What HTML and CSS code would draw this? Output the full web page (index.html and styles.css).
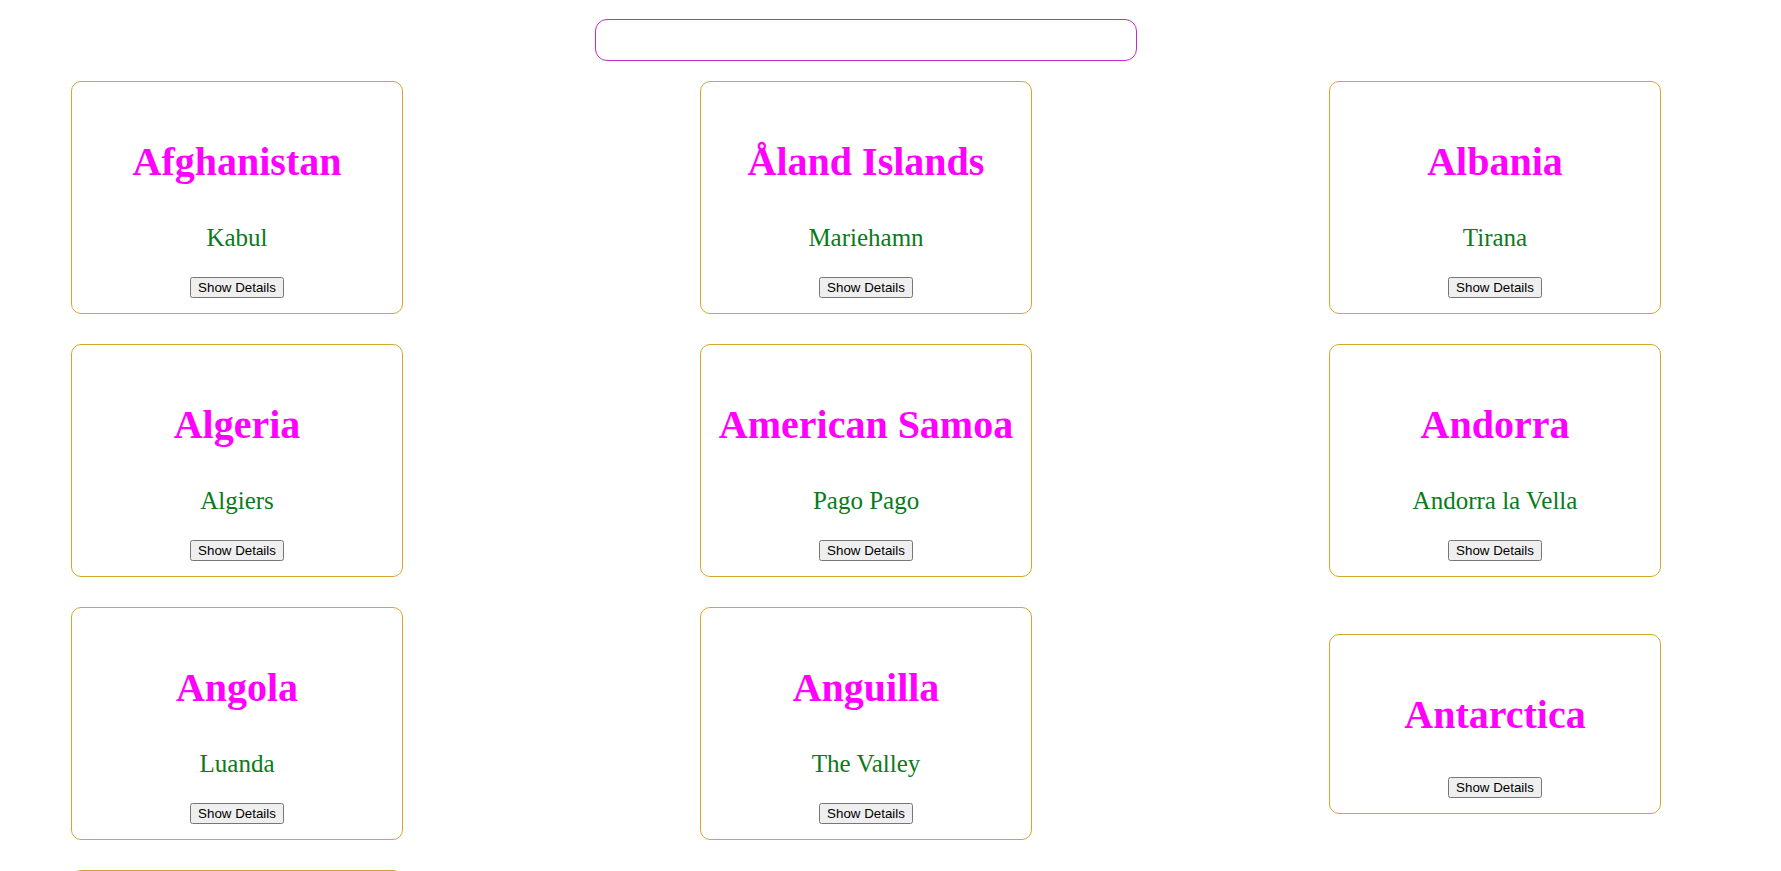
FILE: index.html
```html
<!DOCTYPE html>
<html>
<head>
<meta charset="utf-8">
<title>Countries</title>
<link rel="stylesheet" href="styles.css">
</head>
<body>
<div class="search-row">
  <input class="search" type="text">
</div>
<div class="grid">
  <div class="card"><h1 class="name">Afghanistan</h1><p class="capital">Kabul</p><button class="details">Show Details</button></div>
  <div class="card"><h1 class="name">Åland Islands</h1><p class="capital">Mariehamn</p><button class="details">Show Details</button></div>
  <div class="card"><h1 class="name">Albania</h1><p class="capital">Tirana</p><button class="details">Show Details</button></div>
  <div class="card"><h1 class="name">Algeria</h1><p class="capital">Algiers</p><button class="details">Show Details</button></div>
  <div class="card"><h1 class="name">American Samoa</h1><p class="capital">Pago Pago</p><button class="details">Show Details</button></div>
  <div class="card"><h1 class="name">Andorra</h1><p class="capital">Andorra la Vella</p><button class="details">Show Details</button></div>
  <div class="card"><h1 class="name">Angola</h1><p class="capital">Luanda</p><button class="details">Show Details</button></div>
  <div class="card"><h1 class="name">Anguilla</h1><p class="capital">The Valley</p><button class="details">Show Details</button></div>
  <div class="card"><h1 class="name">Antarctica</h1><p class="capital"></p><button class="details">Show Details</button></div>
  <div class="card"><h1 class="name">Antigua and Barbuda</h1><p class="capital">Saint John's</p><button class="details">Show Details</button></div>
  <div class="card"><h1 class="name">Argentina</h1><p class="capital">Buenos Aires</p><button class="details">Show Details</button></div>
  <div class="card"><h1 class="name">Armenia</h1><p class="capital">Yerevan</p><button class="details">Show Details</button></div>
</div>
</body>
</html>
```
FILE: styles.css
```css
body {
  margin: 8px;
  font-family: "Liberation Serif", "Times New Roman", serif;
  background: #ffffff;
}

.search-row {
  display: flex;
  padding: 11px 0 20px 587px;
}

.search {
  box-sizing: border-box;
  width: 542px;
  height: 42px;
  border: 1px solid #c42ac4;
  border-radius: 12px;
  outline: none;
}

.grid {
  display: grid;
  grid-template-columns: repeat(3, 332px);
  justify-content: space-between;
  align-items: center;
  row-gap: 30px;
  padding: 0 112px 0 63px;
}

.card {
  box-sizing: border-box;
  width: 332px;
  border: 1px solid #d4a72c;
  border-radius: 10px;
  padding: 15px 10px 15px;
  text-align: center;
}

.name {
  font-size: 40px;
  font-weight: bold;
  color: #ff00ff;
  margin: 41px 0 39px;
}

.capital {
  font-size: 25px;
  color: #0a7a1a;
  margin: 25px 0;
}

.details {
  font-family: Arial, "Liberation Sans", sans-serif;
  font-size: 13.33px;
}
```
